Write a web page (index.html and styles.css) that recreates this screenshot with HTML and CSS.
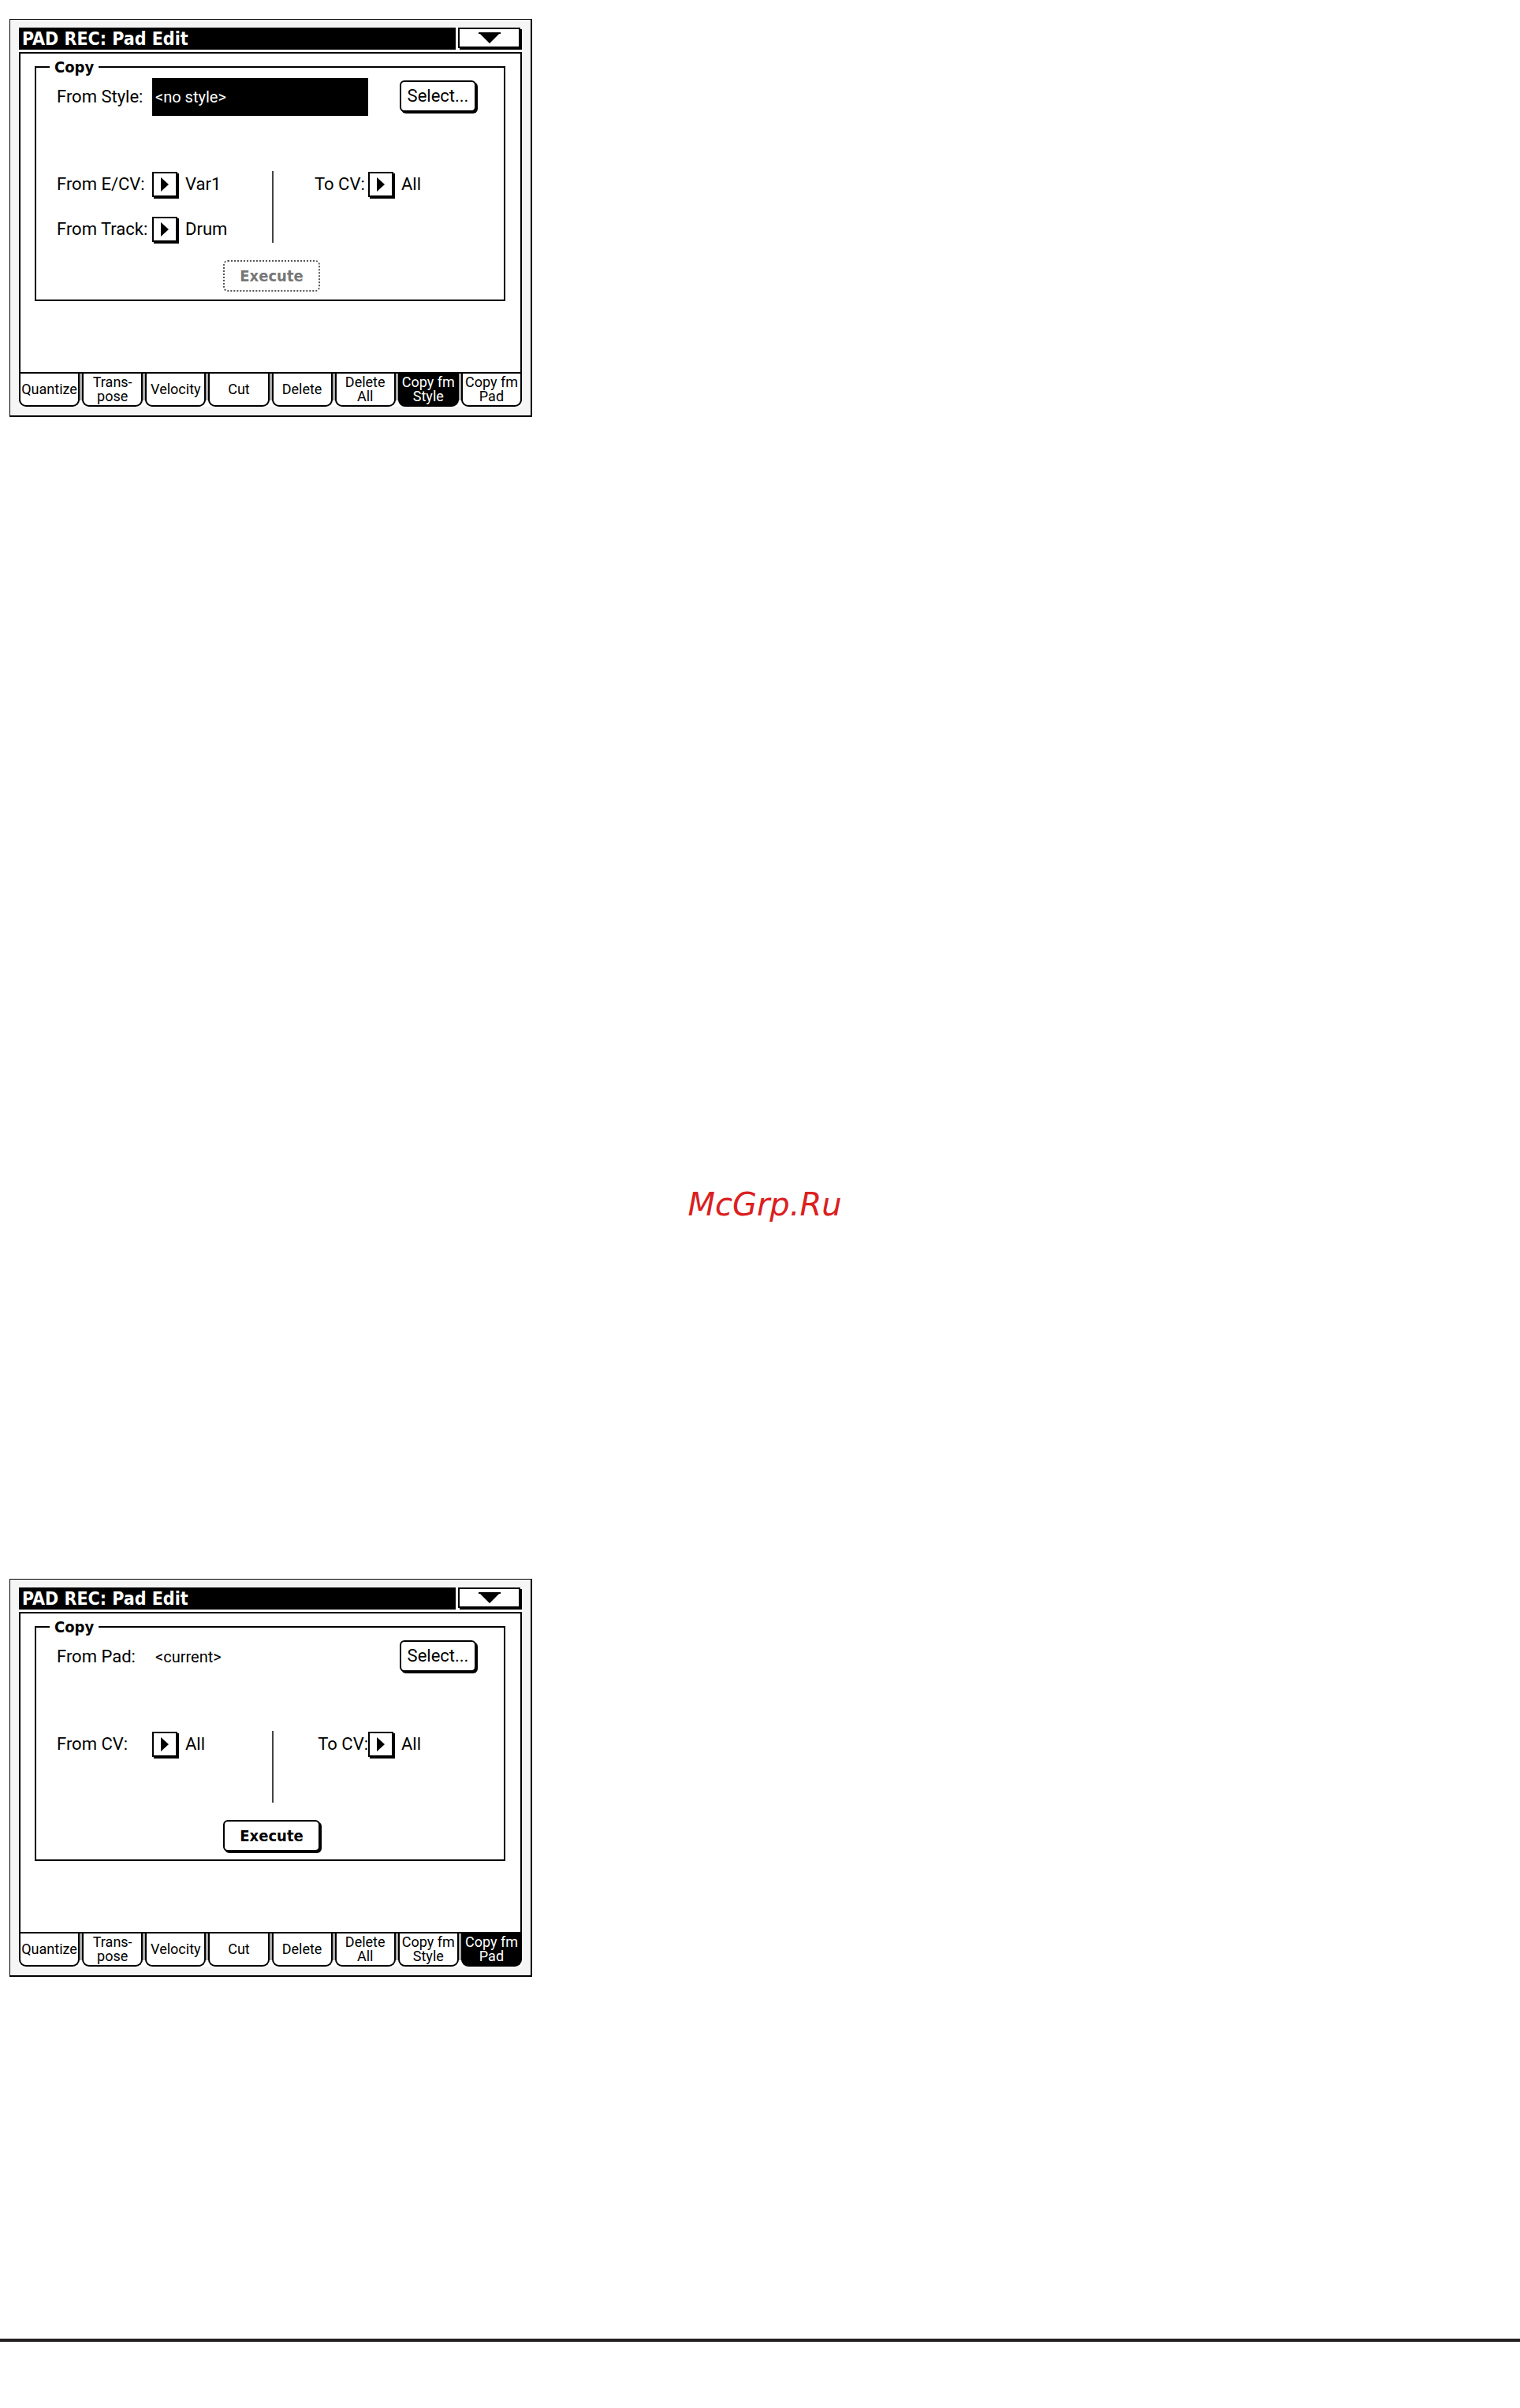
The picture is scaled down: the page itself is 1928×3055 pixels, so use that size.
FILE: index.html
```html
<!DOCTYPE html>
<html lang="en">
<head>
<meta charset="utf-8">
<title>PAD REC: Pad Edit</title>
<link rel="stylesheet" href="styles.css">
</head>
<body>
<main class="page">
  <section class="panel">
    <div class="display">
      <header class="titlebar">
        <h2 class="title">PAD REC: Pad Edit</h2>
        <button class="menu" type="button" aria-label="Page menu"><svg width="28" height="14" viewBox="0 0 28 14"><path d="M0 0H28V2H26L14 14L2 2H0Z"/></svg></button>
      </header>
      <div class="screen">
        <fieldset class="group">
          <legend>Copy</legend>
          <div class="source">
            <label class="label" for="style">From Style:</label>
            <input class="field selected" id="style" value="&lt;no style&gt;" readonly>
            <button class="push select" type="button">Select...</button>
          </div>
          <div class="params">
            <div class="from">
              <span class="label">From E/CV:</span>
              <button class="pop" type="button" aria-label="From E/CV"><svg width="10" height="18" viewBox="0 0 10 18"><path d="M0 0L10 9L0 18Z"/></svg></button>
              <span class="value">Var1</span>
              <span class="label">From Track:</span>
              <button class="pop" type="button" aria-label="From Track"><svg width="10" height="18" viewBox="0 0 10 18"><path d="M0 0L10 9L0 18Z"/></svg></button>
              <span class="value">Drum</span>
            </div>
            <div class="to">
              <span class="label">To CV:</span>
              <button class="pop" type="button" aria-label="To CV"><svg width="10" height="18" viewBox="0 0 10 18"><path d="M0 0L10 9L0 18Z"/></svg></button>
              <span class="value">All</span>
            </div>
          </div>
          <div class="actions"><button class="push execute" type="button" disabled>Execute</button></div>
        </fieldset>
      </div>
      <nav class="tabs">
        <button class="tab" type="button">Quantize</button>
        <button class="tab" type="button">Trans-<br>pose</button>
        <button class="tab" type="button">Velocity</button>
        <button class="tab" type="button">Cut</button>
        <button class="tab" type="button">Delete</button>
        <button class="tab" type="button">Delete<br>All</button>
        <button class="tab active" type="button">Copy fm<br>Style</button>
        <button class="tab" type="button">Copy fm<br>Pad</button>
      </nav>
    </div>
  </section>

  <p class="watermark">McGrp.Ru</p>

  <section class="panel">
    <div class="display">
      <header class="titlebar">
        <h2 class="title">PAD REC: Pad Edit</h2>
        <button class="menu" type="button" aria-label="Page menu"><svg width="28" height="14" viewBox="0 0 28 14"><path d="M0 0H28V2H26L14 14L2 2H0Z"/></svg></button>
      </header>
      <div class="screen">
        <fieldset class="group">
          <legend>Copy</legend>
          <div class="source">
            <label class="label" for="pad">From Pad:</label>
            <input class="field" id="pad" value="&lt;current&gt;" readonly>
            <button class="push select" type="button">Select...</button>
          </div>
          <div class="params">
            <div class="from">
              <span class="label">From CV:</span>
              <button class="pop" type="button" aria-label="From CV"><svg width="10" height="18" viewBox="0 0 10 18"><path d="M0 0L10 9L0 18Z"/></svg></button>
              <span class="value">All</span>
            </div>
            <div class="to tight">
              <span class="label">To CV:</span>
              <button class="pop" type="button" aria-label="To CV"><svg width="10" height="18" viewBox="0 0 10 18"><path d="M0 0L10 9L0 18Z"/></svg></button>
              <span class="value">All</span>
            </div>
          </div>
          <div class="actions"><button class="push execute" type="button">Execute</button></div>
        </fieldset>
      </div>
      <nav class="tabs">
        <button class="tab" type="button">Quantize</button>
        <button class="tab" type="button">Trans-<br>pose</button>
        <button class="tab" type="button">Velocity</button>
        <button class="tab" type="button">Cut</button>
        <button class="tab" type="button">Delete</button>
        <button class="tab" type="button">Delete<br>All</button>
        <button class="tab" type="button">Copy fm<br>Style</button>
        <button class="tab active" type="button">Copy fm<br>Pad</button>
      </nav>
    </div>
  </section>
</main>
<hr class="rule">
</body>
</html>
```
FILE: styles.css
```css
* {
  box-sizing: border-box;
}

body {
  margin: 0;
  padding-bottom: 84px;
  background: #fff;
  color: #000;
  font: 22px/26px Roboto, "Liberation Sans", sans-serif;
}

button,
input {
  margin: 0;
  padding: 0;
  border: 0;
  border-radius: 0;
  background: #fff;
  color: #000;
  font: inherit;
}

svg {
  display: block;
}

.page {
  padding: 24px 12px 0;
}

/* Device frame */
.panel {
  width: 100%;
  max-width: 663px;
  padding: 10px 11px 11px;
  border: 1px solid #000;
  border-right-width: 2px;
  border-bottom-width: 2px;
  background: #f5f5f5;
}

.display {
  background: #fff;
}

.titlebar {
  display: flex;
  gap: 3px;
  height: 31px;
  padding-bottom: 3px;
}

.title {
  flex: 1;
  margin: 0;
  padding-left: 4px;
  background: #000;
  color: #fff;
  font: bold 23px/28px "DejaVu Sans Condensed", "DejaVu Sans", sans-serif;
}

.menu {
  display: flex;
  justify-content: center;
  width: 79px;
  height: 26px;
  margin-right: 2px;
  padding-top: 4px;
  border: 2px solid #000;
  box-shadow: 2px 2px 0 #000;
}

.screen {
  padding: 6px 19px 90px 18px;
  border: 2px solid #000;
}

.group {
  min-width: 0;
  margin: 0;
  padding: 3px 33px 8px 26px;
  border: 2px solid #000;
}

legend {
  margin-left: -9px;
  padding: 0 6px;
  font: bold 20px/22px "DejaVu Sans Condensed", "DejaVu Sans", sans-serif;
}

.source {
  display: flex;
  align-items: center;
  margin-bottom: 70px;
}

.source .label {
  width: 121px;
}

.field {
  flex: 1;
  min-width: 0;
  height: 48px;
  padding-left: 4px;
  font-size: 20px;
}

.selected {
  background: #000;
  color: #fff;
}

/* Raised buttons */
.push {
  height: 40px;
  border: 2px solid #000;
  border-radius: 6px;
  box-shadow: 2px 2px 0 #000;
}

.select {
  width: 97px;
  margin: 0 2px 2px 40px;
}

.pop {
  display: grid;
  place-items: center;
  width: 32px;
  height: 32px;
  border: 2px solid #000;
  box-shadow: 2px 2px 0 #000;
}

.params {
  display: flex;
  min-height: 91px;
}

.from,
.to {
  display: grid;
  grid-auto-rows: 34px;
  align-content: start;
  align-items: center;
  row-gap: 23px;
}

.from {
  grid-template-columns: 121px 42px 1fr;
  width: 275px;
  border-right: 2px solid #444;
}

.to {
  grid-template-columns: 68px 42px 1fr;
  margin-left: 52px;
}

.tight .label {
  text-align: right;
}

.actions {
  padding: 22px 0 2px 211px;
}

.execute {
  display: block;
  width: 123px;
  font: bold 20px/24px "DejaVu Sans Condensed", "DejaVu Sans", sans-serif;
}

.execute:disabled {
  border: 2px dotted #555;
  box-shadow: none;
  color: #777;
}

/* Page tabs */
.tabs {
  display: grid;
  grid-template-columns: repeat(8, 1fr);
  gap: 3px;
  background: linear-gradient(#aaa, #aaa) 0 0 / 100% 34px no-repeat;
}

.tab {
  height: 42px;
  border: 2px solid #000;
  border-top: 0;
  border-radius: 0 0 9px 9px;
  font-size: 18px;
  line-height: 18px;
  white-space: nowrap;
}

.active {
  background: #000;
  color: #fff;
}

.watermark {
  margin: 975px 0 451px;
  padding-left: 12px;
  color: #da2020;
  font: italic 40px/48px "DejaVu Sans", sans-serif;
  text-align: center;
}

.rule {
  height: 4px;
  margin: 459px 0 0;
  border: 0;
  background: #231f20;
}
```
